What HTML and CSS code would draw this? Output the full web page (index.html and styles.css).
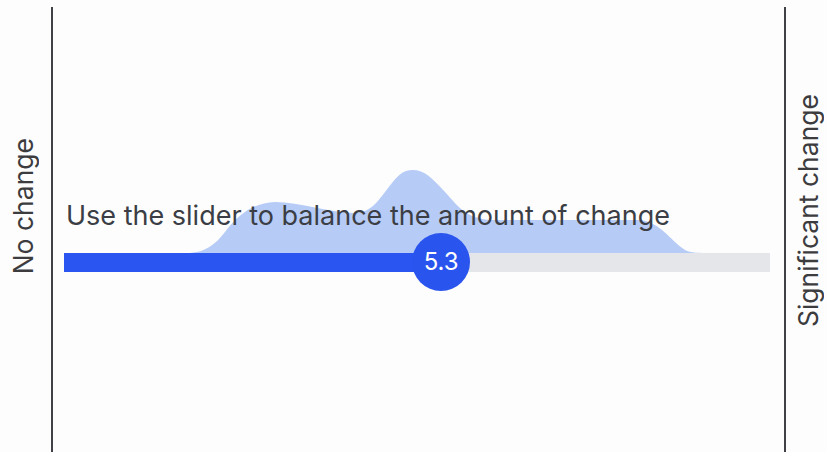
FILE: index.html
```html
<!DOCTYPE html>
<html lang="en">
<head>
<meta charset="utf-8">
<title>Amount of change</title>
<link rel="stylesheet" href="styles.css">
</head>
<body>
<div class="frame">
  <div class="side side-left">
    <span class="side-label side-label-up">No change</span>
  </div>
  <div class="axis"></div>
  <div class="plot">
    <div class="chart">
      <svg class="dist" viewBox="0 0 706 93" preserveAspectRatio="none" aria-hidden="true">
        <path d="M126,93 C141,92 151,85 161,72 C176,52 191,43 211,42 C236,42 266,53 291,53 C308,53 316,38 328,23 C336,13 341,10 348,10 C361,10 368,18 381,32 C394,46 401,58 426,60 L576,60 C596,62 606,80 621,90 C626,93 636,93 646,93 Z"/>
      </svg>
      <p class="prompt">Use the slider to balance the amount of change</p>
    </div>
    <div class="track">
      <div class="fill" style="width: 53%"></div>
      <div class="thumb" style="left: 53%">5.3</div>
    </div>
  </div>
  <div class="axis"></div>
  <div class="side side-right">
    <span class="side-label side-label-up">Significant change</span>
  </div>
</div>
</body>
</html>
```
FILE: styles.css
```css
* { box-sizing: border-box; }

html, body {
  margin: 0;
  height: 100%;
  background: #fdfdfd;
  font-family: Inter, "Noto Sans", sans-serif;
  color: #3b3e45;
}

.frame {
  display: flex;
  height: 452px;
}

.side {
  display: flex;
  align-items: center;
  justify-content: center;
  padding-bottom: 40px;
}

.side-left { width: 51px; padding-right: 5px; }
.side-right { flex: 1; padding-left: 2px; padding-bottom: 30px; }

.side-label {
  writing-mode: vertical-rl;
  transform: rotate(180deg);
  font-size: 26.5px;
  white-space: nowrap;
  color: #3c3c3f;
}

.axis {
  width: 2px;
  margin-top: 7px;
  background: #3f4146;
}

.plot {
  width: 731px;
  padding: 160px 14px 0 11px;
}

.chart {
  position: relative;
  height: 93px;
  display: flex;
  flex-direction: column;
  justify-content: flex-end;
}

.dist {
  position: absolute;
  inset: 0;
  width: 100%;
  height: 100%;
}

.dist path { fill: #b6cbf6; }

.prompt {
  position: relative;
  margin: 0 0 22px 2px;
  font-size: 27px;
  line-height: 30px;
  white-space: nowrap;
}

.track {
  position: relative;
  height: 19px;
  background: #e4e6ea;
}

.fill {
  height: 100%;
  background: #2b55f1;
}

.thumb {
  position: absolute;
  top: 50%;
  width: 58px;
  height: 58px;
  margin: -30px 0 0 -26px;
  border-radius: 50%;
  background: #2a54ee;
  color: #fff;
  font-size: 24px;
  display: flex;
  align-items: center;
  justify-content: center;
}
```
